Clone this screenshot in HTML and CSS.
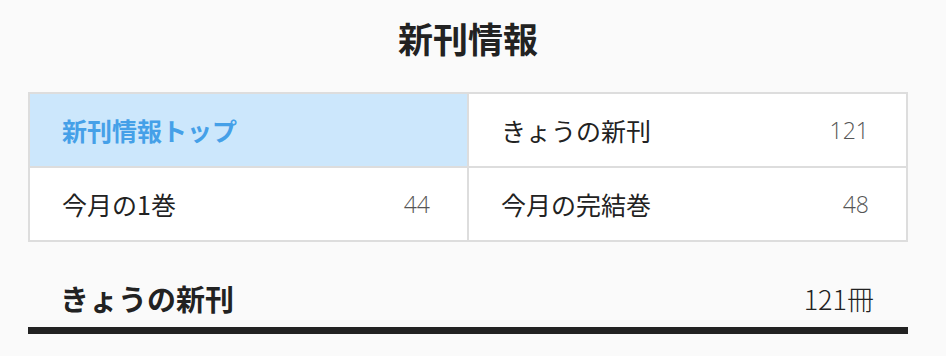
FILE: index.html
```html
<!DOCTYPE html>
<html>
  <head lang="ja">
    <meta charset="UTF-8" />
    <title>新刊情報</title>
    <link rel="stylesheet" href="styles.css">
  </head>

  <body>
    <div class="page">
      <div class="page-header">
        <h1 class="page-title">新刊情報</h1>
      </div>
      <ul class="menu">
        <li class="menu-item active"><a href="javascript:void(0);">新刊情報トップ</a></li>
        <li class="menu-item">
          <a href="javascript:void(0);">きょうの新刊</a>
          <span class="menu-count">121</span>
        </li>
        <li class="menu-item">
          <a href="javascript:void(0);">今月の1巻</a>
          <span class="menu-count">44</span>
        </li>
        <li class="menu-item">
          <a href="javascript:void(0);">今月の完結巻</a>
          <span class="menu-count">48</span>
        </li>
      </ul>
      <div class="section-head">
        <h2 class="section-title">きょうの新刊</h2>
        <span class="section-count">121冊</span>
      </div>
    </div>
  </body>
</html>
```

FILE: styles.css
```css
ul,
li,
div,
p,
span,
h1,
h2,
a {
  padding: 0px;
  margin: 0px;
}

body {
  margin: 0;
  background: #fafafa;
  color: #222222;
  font-family: "Noto Sans CJK JP", "Noto Sans", sans-serif;
}

a {
  text-decoration: none;
  color: #222222;
}

.page {
  width: 880px;
  margin-left: 28px;
}

.page-header {
  height: 92px;
  padding-bottom: 16px;
  box-sizing: border-box;
  display: flex;
  align-items: center;
  justify-content: center;
}

.page-title {
  font-size: 35px;
  font-weight: bold;
  line-height: 40px;
}

.menu {
  list-style: none;
  display: grid;
  grid-template-columns: 1fr 1fr;
  gap: 2px;
  padding: 2px;
  background: #dddddd;
}

.menu-item {
  height: 72px;
  padding: 0px 37px 0px 32px;
  background: #ffffff;
  display: flex;
  align-items: center;
  justify-content: space-between;
}

.menu-item a {
  font-size: 25px;
  line-height: 30px;
}

.menu-item.active {
  background: #cce7fc;
}

.menu-item.active a {
  color: #45a0e8;
  font-weight: bold;
}

.menu-count {
  font-family: "Open Sans", "Noto Sans", sans-serif;
  font-weight: 300;
  font-size: 23px;
  color: #555555;
}

.section-head {
  height: 58px;
  margin-top: 27px;
  padding: 0px 34px 0px 32px;
  border-bottom: 7px solid #222222;
  display: flex;
  align-items: center;
  justify-content: space-between;
}

.section-title {
  font-size: 29px;
  font-weight: bold;
}

.section-count {
  font-size: 27px;
  font-weight: 300;
}
```
